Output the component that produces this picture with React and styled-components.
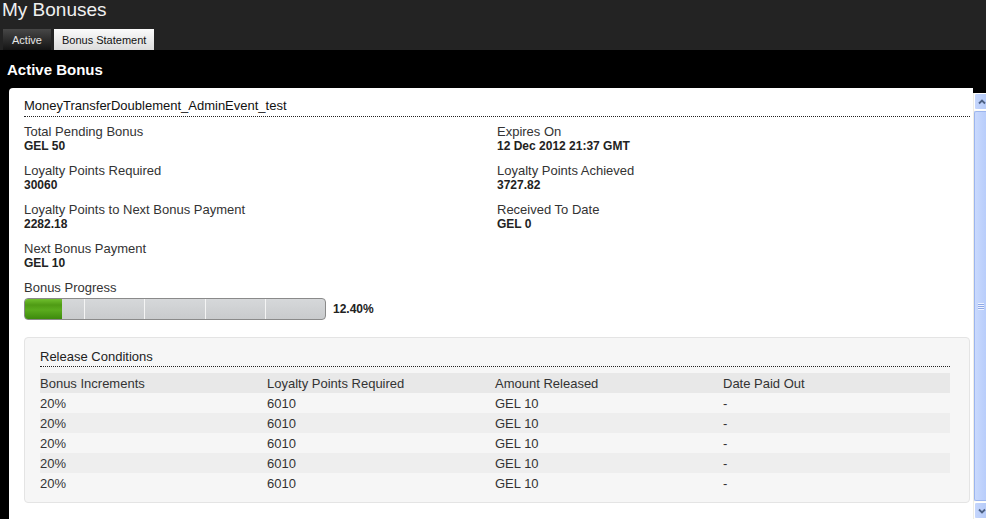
import React from 'react'
import styled, { createGlobalStyle } from 'styled-components'

const GlobalStyle = createGlobalStyle`
    html, body {
        margin: 0;
        padding: 0;
        background: #000;
        overflow: hidden;
    }
    body {
        font-family: "Liberation Sans", Arial, sans-serif;
    }
`

const Header = styled.div`
    background-color: #232323;
    height: 50px;
    display: flex;
    flex-direction: column;
`
const PageTitle = styled.h1`
    margin: 0;
    height: 29px;
    padding-left: 2px;
    font-size: 19px;
    font-weight: normal;
    line-height: 19px;
    color: #f0f0f0;
`
const Tabs = styled.div`
    display: flex;
    gap: 3px;
    padding-left: 3px;
    align-items: flex-end;
    flex: 1;
`
const Tab = styled.div`
    height: 21px;
    line-height: 22px;
    padding: 0 ${p => (p.$light ? 8 : 9)}px;
    font-size: 11px;
    color: ${p => (p.$light ? '#111' : '#e6e6e6')};
    background: ${p => (p.$light
        ? 'linear-gradient(#fbfbfb, #dcdcdc)'
        : 'linear-gradient(#474747, #141414)')};
`
const SectionTitle = styled.h2`
    margin: 0;
    padding: 12px 7px 0;
    height: 26px;
    font-size: 15px;
    line-height: 15px;
    font-weight: bold;
    color: #fff;
`
const Body = styled.div`
    display: flex;
    padding-left: 9px;
    height: 431px;
`
const Panel = styled.div`
    flex: 1;
    background-color: #fff;
    border-radius: 4px 0 0 0;
    padding: 10px 3px 0 15px;
    overflow: hidden;
`
const BonusName = styled.div`
    font-size: 13px;
    line-height: 15px;
    color: #111;
    padding-bottom: 3px;
    border-bottom: 1px dotted #222;
`
const InfoGrid = styled.div`
    display: grid;
    grid-template-columns: 473px 1fr;
    row-gap: 10px;
    margin-top: 7px;
`
const Field = styled.div`
    line-height: 14px;
`
const Label = styled.div`
    font-size: 13px;
    line-height: 15px;
    color: #333;
`
const Value = styled.div`
    font-size: 12px;
    color: #222;
    font-weight: bold;
`
const ProgressRow = styled.div`
    display: flex;
    align-items: center;
    margin-top: 3px;
`
const Bar = styled.div`
    position: relative;
    width: 300px;
    height: 20px;
    border: 1px solid #8a8a8a;
    border-radius: 4px;
    overflow: hidden;
    background: linear-gradient(#d6d8da, #c9cbcd);
    display: flex;
`
const Segment = styled.div`
    flex: 1;
    border-left: ${p => (p.$first ? 'none' : '1px solid #f4f4f4')};
`
const Fill = styled.div`
    position: absolute;
    left: 0;
    top: 0;
    bottom: 0;
    background: linear-gradient(#6fbf2e 0%, #4f9b14 30%, #5aab1d 55%, #3d8a0c 100%);
`
const Percent = styled.span`
    margin-left: 7px;
    font-size: 12px;
    font-weight: bold;
    color: #222;
`
const ReleaseBox = styled.div`
    margin-top: 17px;
    background-color: #f6f6f6;
    border: 1px solid #e4e4e4;
    border-radius: 4px;
    padding: 11px 19px 9px 15px;
`
const ReleaseTitle = styled.div`
    font-size: 13px;
    line-height: 15px;
    color: #222;
    padding-bottom: 2px;
    border-bottom: 1px dotted #222;
`
const Table = styled.div`
    margin-top: 6px;
`
const TableRow = styled.div`
    display: grid;
    grid-template-columns: 227px 228px 228px 1fr;
    height: 20px;
    align-items: center;
    font-size: 13px;
    color: #333;
    background-color: ${p => p.$bg || 'transparent'};
`
const Scrollbar = styled.div`
    width: 12px;
    margin-top: 5px;
    display: flex;
    flex-direction: column;
    background: #fbfbf8;
    border-left: 1px solid #eeede5;
`
const ScrollButton = styled.div`
    height: 15px;
    display: flex;
    align-items: center;
    justify-content: center;
    padding-left: 2px;
    background: linear-gradient(90deg, #c5d6fc, #b6cbf8);
    border: 1px solid #fff;
    border-right: none;
    border-radius: 2px 0 0 2px;
`
const Thumb = styled.div`
    flex: 1;
    margin: 1px 0;
    background: linear-gradient(90deg, #c9d9fd, #b8cdfb);
    border: 1px solid #9cb5ee;
    border-right: none;
    border-radius: 2px 0 0 2px;
    display: flex;
    align-items: center;
    justify-content: center;
`
const Grip = styled.div`
    width: 6px;
    height: 7px;
    background: repeating-linear-gradient(#eef3ff 0 1px, #8ea8e6 1px 2px);
`

const info = [
    ['Total Pending Bonus', 'GEL 50', 'Expires On', '12 Dec 2012 21:37 GMT'],
    ['Loyalty Points Required', '30060', 'Loyalty Points Achieved', '3727.82'],
    ['Loyalty Points to Next Bonus Payment', '2282.18', 'Received To Date', 'GEL 0'],
    ['Next Bonus Payment', 'GEL 10'],
]

const rows = Array.from({ length: 5 }, () => ['20%', '6010', 'GEL 10', '-'])

const Chevron = ({ down }) => (
    <svg width="8" height="6" viewBox="0 0 8 6">
        <path
            d={down ? 'M1 1.5 L4 4.5 L7 1.5' : 'M1 4.5 L4 1.5 L7 4.5'}
            fill="none"
            stroke="#4d6185"
            strokeWidth="1.8"
        />
    </svg>
)

const App = () => {
    const progress = 12.4
    return (
        <>
            <GlobalStyle />
            <Header>
                <PageTitle>My Bonuses</PageTitle>
                <Tabs>
                    <Tab>Active</Tab>
                    <Tab $light>Bonus Statement</Tab>
                </Tabs>
            </Header>
            <SectionTitle>Active Bonus</SectionTitle>
            <Body>
                <Panel>
                    <BonusName>MoneyTransferDoublement_AdminEvent_test</BonusName>
                    <InfoGrid>
                        {info.map(([l1, v1, l2, v2]) => (
                            <React.Fragment key={l1}>
                                <Field>
                                    <Label>{l1}</Label>
                                    <Value>{v1}</Value>
                                </Field>
                                <Field>
                                    {l2 && <Label>{l2}</Label>}
                                    {v2 && <Value>{v2}</Value>}
                                </Field>
                            </React.Fragment>
                        ))}
                        <Field>
                            <Label>Bonus Progress</Label>
                        </Field>
                    </InfoGrid>
                    <ProgressRow>
                        <Bar>
                            <Fill style={{ width: `${progress}%` }} />
                            {[0, 1, 2, 3, 4].map(i => <Segment key={i} $first={i === 0} />)}
                        </Bar>
                        <Percent>12.40%</Percent>
                    </ProgressRow>
                    <ReleaseBox>
                        <ReleaseTitle>Release Conditions</ReleaseTitle>
                        <Table>
                            <TableRow $bg="#e8e8e8">
                                <span>Bonus Increments</span>
                                <span>Loyalty Points Required</span>
                                <span>Amount Released</span>
                                <span>Date Paid Out</span>
                            </TableRow>
                            {rows.map((r, i) => (
                                <TableRow key={i} $bg={i % 2 === 1 ? '#eeeeee' : undefined}>
                                    {r.map((c, j) => <span key={j}>{c}</span>)}
                                </TableRow>
                            ))}
                        </Table>
                    </ReleaseBox>
                </Panel>
                <Scrollbar>
                    <ScrollButton><Chevron /></ScrollButton>
                    <Thumb><Grip /></Thumb>
                    <ScrollButton><Chevron down /></ScrollButton>
                </Scrollbar>
            </Body>
        </>
    )
}

export default App
